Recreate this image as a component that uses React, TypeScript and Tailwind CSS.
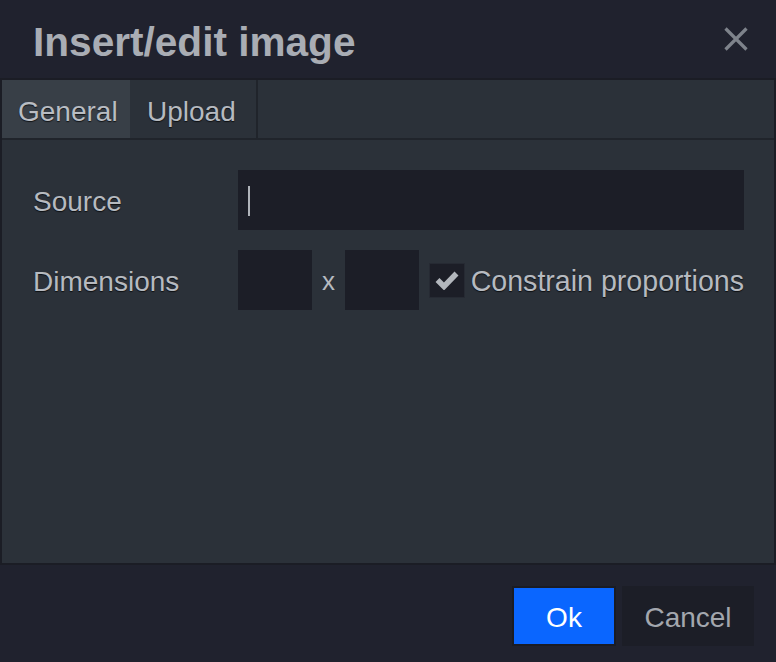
import { useState } from "react";

const labelClass =
  "w-[205px] shrink-0 pt-[3px] text-[28px] text-[#b6bac0] [text-shadow:0_1px_1px_rgba(0,0,0,0.7)]";

export default function App() {
  const [tab, setTab] = useState("General");
  const [constrain, setConstrain] = useState(true);

  return (
    <div
      className="flex h-[662px] w-[776px] flex-col bg-[#20222e] text-[#b6bac0]"
      style={{ fontFamily: '"Liberation Sans", Arial, sans-serif' }}
    >
      {/* title bar */}
      <div className="flex h-[78px] shrink-0 items-center justify-between pl-[33px] pr-[28px]">
        <h1 className="pt-[6px] text-[40.6px] font-bold text-[#a9adb4]">Insert/edit image</h1>
        <button className="text-[#7e838b]">
          <svg width="24" height="24" viewBox="0 0 24 24">
            <path d="M1.5 1.5 L22.5 22.5 M22.5 1.5 L1.5 22.5" stroke="currentColor" strokeWidth="3.2" />
          </svg>
        </button>
      </div>

      <div className="flex flex-1 flex-col border-x-2 border-t-2 border-b-2 border-[#1b1d25] bg-[#2b3139]">
        {/* tabs */}
        <div className="flex h-[60px] shrink-0 border-b-2 border-[#20242b]">
          {["General", "Upload"].map((t) => (
            <button
              key={t}
              onClick={() => setTab(t)}
              className={
                "flex items-center border-r-2 pt-[6px] text-[28px] [text-shadow:0_1px_1px_rgba(0,0,0,0.7)] " +
                (t === "General"
                  ? "w-[130px] pl-[16px] "
                  : "w-[126px] pl-[15px] ") +
                (tab === t
                  ? "border-[#2b3139] bg-[#383f47] text-[#b9bdc3]"
                  : "border-[#20242b] text-[#b6bac0]")
              }
            >
              {t}
            </button>
          ))}
        </div>

        {/* body */}
        <div className="flex flex-1 flex-col gap-[20px] pl-[31px] pr-[30px] pt-[30px]">
          <div className="flex h-[60px] items-center">
            <span className={labelClass}>Source</span>
            <div className="flex h-[60px] flex-1 items-center bg-[#1c1e27] pl-[10px] pt-[2px]">
              <div className="h-[30px] w-[2px] bg-[#b0b4ba]" />
            </div>
          </div>
          <div className="flex h-[60px] items-center">
            <span className={labelClass}>Dimensions</span>
            <div className="h-[60px] w-[74px] bg-[#1c1e27]" />
            <span className="w-[34px] pt-[3px] text-center text-[26px] text-[#b6bac0]">x</span>
            <div className="h-[60px] w-[74px] bg-[#1c1e27]" />
            <button
              onClick={() => setConstrain(!constrain)}
              className="ml-[10px] flex h-[35px] w-[36px] items-center justify-center border border-[#262a33] bg-[#1c1e27]"
            >
              {constrain && (
                <svg width="24" height="20" viewBox="0 0 24 20">
                  <path d="M2.5 10 L9 16.5 L21.5 3.5" fill="none" stroke="#b3b7bd" strokeWidth="5.5" />
                </svg>
              )}
            </button>
            <span className="ml-[6px] pt-[3px] text-[28.6px] whitespace-nowrap text-[#b6bac0] [text-shadow:0_1px_1px_rgba(0,0,0,0.7)]">
              Constrain proportions
            </span>
          </div>
        </div>
      </div>

      {/* footer */}
      <div className="flex h-[97px] shrink-0 items-start justify-end gap-[6px] pr-[22px] pt-[21px]">
        <button className="h-[60px] w-[104px] border-2 border-[#1a1c24] bg-[#0a66ff] pt-[3px] text-[28px] text-white">
          Ok
        </button>
        <button className="h-[60px] w-[132px] bg-[#1c1e27] pt-[3px] text-[28px] text-[#a3a7ae]">
          Cancel
        </button>
      </div>
    </div>
  );
}
